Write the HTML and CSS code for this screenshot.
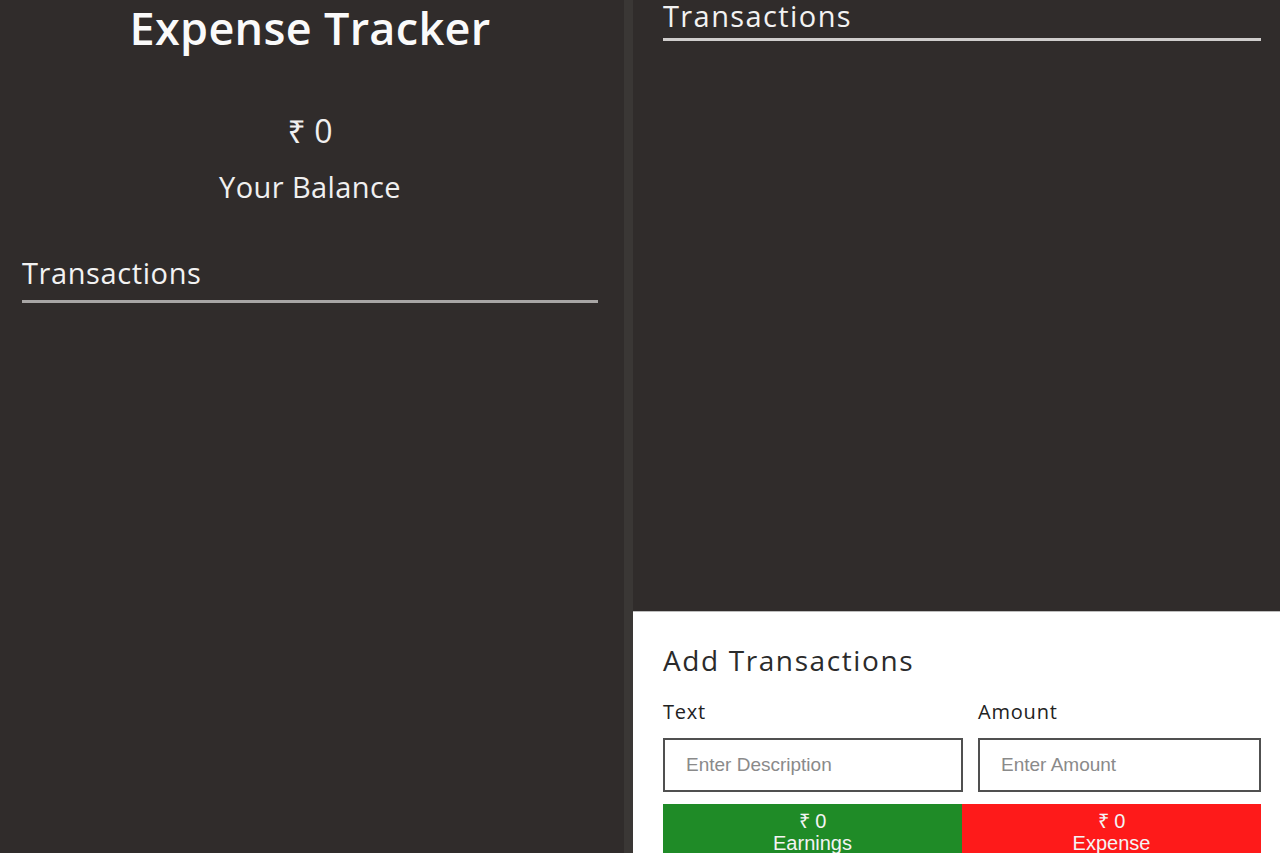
FILE: index.html
```html
<!DOCTYPE html>
<html lang="en">
<head>
<meta charset="utf-8">
<title>Expense Tracker</title>
<link rel="stylesheet" href="styles.css">
</head>
<body>
<div class="app">
  <section class="left">
    <h1 class="title">Expense Tracker</h1>
    <div class="balance">
      <div class="balance-amount">₹ 0</div>
      <div class="balance-label">Your Balance</div>
    </div>
    <h3 class="section-heading">Transactions</h3>
  </section>
  <div class="divider"></div>
  <section class="right">
    <div class="right-top">
      <h3 class="section-heading right-heading">Transactions</h3>
    </div>
    <div class="form-box">
      <h3 class="form-title">Add Transactions</h3>
      <div class="fields">
        <div class="field field-text">
          <label class="field-label">Text</label>
          <input class="field-input" type="text" placeholder="Enter Description">
        </div>
        <div class="field field-amount">
          <label class="field-label">Amount</label>
          <input class="field-input" type="text" placeholder="Enter Amount">
        </div>
      </div>
      <div class="totals">
        <div class="total earnings"><span>₹ 0</span><span>Earnings</span></div>
        <div class="total expense"><span>₹ 0</span><span>Expense</span></div>
      </div>
    </div>
  </section>
</div>
</body>
</html>
```

FILE: styles.css
```css
html, body {
  margin: 0;
  padding: 0;
  height: 100%;
  overflow: hidden;
}
body {
  background: #302c2b;
  font-family: "Open Sans", "Noto Sans", sans-serif;
  color: #f2f2f2;
}
.app {
  display: flex;
  height: 853px;
}
.left {
  flex: 0 0 576px;
  padding: 0 26px 0 22px;
  display: flex;
  flex-direction: column;
}
.title {
  margin: 0;
  text-align: center;
  font-size: 45px;
  font-weight: 600;
  line-height: 56px;
  letter-spacing: 0.3px;
  color: #fafafa;
}
.balance {
  margin-top: 55px;
  text-align: center;
}
.balance-amount {
  font-size: 32px;
  line-height: 40px;
  color: #f0f0f0;
}
.balance-label {
  margin-top: 18px;
  font-size: 29px;
  line-height: 36px;
  letter-spacing: 0.4px;
  color: #f0f0f0;
}
.section-heading {
  margin: 0;
  font-size: 29px;
  font-weight: 400;
  line-height: 36px;
  letter-spacing: 0.6px;
  color: #f2f2f2;
  padding-bottom: 9px;
  border-bottom: 3px solid #a8a6a5;
}
.left .section-heading {
  margin-top: 50px;
}
.divider {
  flex: 0 0 9px;
  background: #3a3735;
}
.right {
  flex: 1 1 auto;
  min-width: 0;
  display: flex;
  flex-direction: column;
}
.right-top {
  flex: 1;
  padding: 0 19px 0 30px;
}
.right-heading {
  font-size: 29px;
  line-height: 32px;
  letter-spacing: 1.4px;
  padding-bottom: 6px;
  border-bottom-color: #cfcdcc;
}
.form-box {
  height: 241px;
  background: #ffffff;
  border-top: 1px solid #bdbdbd;
  padding: 0 19px 0 30px;
  display: flex;
  flex-direction: column;
}
.form-title {
  margin: 30px 0 0;
  font-size: 28px;
  font-weight: 500;
  line-height: 36px;
  letter-spacing: 1.6px;
  color: #2b2b2b;
}
.fields {
  display: flex;
  gap: 15px;
  margin-top: 21px;
}
.field {
  display: flex;
  flex-direction: column;
}
.field-text { flex: 0 0 300px; }
.field-amount { flex: 1; min-width: 0; }
.field-label {
  font-size: 20px;
  font-weight: 500;
  line-height: 26px;
  letter-spacing: 0.8px;
  color: #222;
  margin-bottom: 13px;
}
.field-input {
  box-sizing: border-box;
  width: 100%;
  height: 54px;
  border: 2px solid #505050;
  padding: 0 21px;
  font-family: "Liberation Sans", Arial, sans-serif;
  font-size: 19px;
  color: #333;
  background: #fff;
  outline: none;
}
.field-input::placeholder {
  color: #8a8a8a;
}
.totals {
  display: flex;
  margin-top: 12px;
  height: 60px;
}
.total {
  flex: 1;
  display: flex;
  flex-direction: column;
  align-items: center;
  padding-top: 6px;
  font-family: "Liberation Sans", Arial, sans-serif;
  font-size: 20px;
  line-height: 22px;
  color: #f4f4f4;
}
.earnings { background: #1f8b27; }
.expense { background: #fe1a1a; }
```
